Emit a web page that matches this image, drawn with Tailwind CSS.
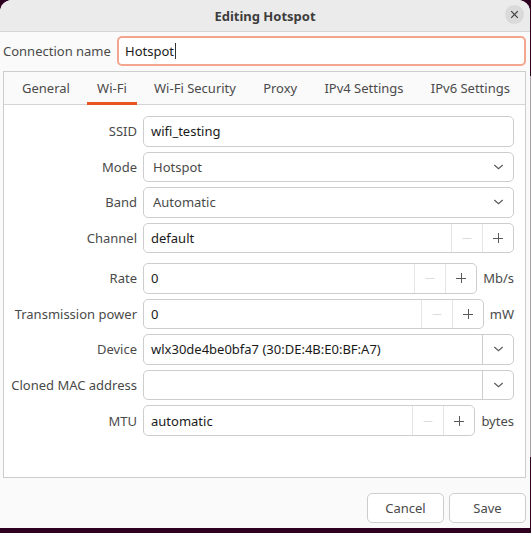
<!DOCTYPE html>
<html lang="en">

<head>
    <meta charset="UTF-8">
    <meta name="viewport" content="width=device-width, initial-scale=1.0">
    <title>Editing Hotspot</title>
    <script src="https://cdn.jsdelivr.net/npm/@tailwindcss/browser@4"></script>
</head>

<body class="relative flex flex-col min-h-screen pr-px pb-[5px] bg-[#2c001e] font-['Noto_Sans',sans-serif] text-[13px] leading-[18px] text-[#4a4a4a]">
    <!-- window behind the dialog, seen along the right edge -->
    <div class="absolute right-0 inset-y-[76px] w-px bg-[#a8a0a5]"></div>

    <div class="flex flex-col flex-1 rounded-t-xl bg-[#fafafa] overflow-hidden">
        <header class="relative flex items-center justify-center h-8 bg-[#ebebeb] border-b border-[#d5d5d5]">
            <h1 class="font-bold text-[#3d3d3d]">Editing Hotspot</h1>
            <button type="button" aria-label="Close" class="absolute right-[6px] top-[5px] flex items-center justify-center size-[19px] rounded-full bg-[#dadada]">
                <svg class="size-[9px]" viewBox="0 0 9 9" fill="none" stroke="#3d3d3d" stroke-width="1.2"><path d="M1.2 1.2l6.6 6.6M7.8 1.2L1.2 7.8" /></svg>
            </button>
        </header>

        <form class="flex flex-col flex-1 pl-[3px] pr-1 pb-[5px]">
            <div class="flex items-center pt-1">
                <label for="name" class="w-[114px]">Connection name</label>
                <div class="relative flex-1">
                    <input type="text" id="name" value="Hotspot" class="block w-full h-[30px] px-[6px] rounded-[5px] border-2 border-[#f3a68d] bg-white text-[#1a1a1a] outline-none" />
                    <span class="absolute left-[58px] top-[7px] w-px h-4 bg-[#333]"></span>
                </div>
            </div>

            <div class="flex flex-col flex-1 mt-[5px] border border-[#cdcdcd] bg-white">
                <nav class="flex justify-between h-[33px] pl-[18px] pr-[15px] bg-[#fafafa] border-b border-[#d5d5d5]">
                    <button type="button">General</button>
                    <button type="button" class="relative after:absolute after:-inset-x-[10px] after:-bottom-px after:h-[3px] after:bg-[#e95420]">Wi-Fi</button>
                    <button type="button">Wi-Fi Security</button>
                    <button type="button">Proxy</button>
                    <button type="button">IPv4 Settings</button>
                    <button type="button">IPv6 Settings</button>
                </nav>

                <div class="pl-[7px] pr-[11px] pt-[11px]">
                    <div class="grid grid-cols-[126px_1fr] grid-rows-4 h-[137px] gap-x-[6px] gap-y-[5px]">
                        <label for="ssid" class="self-center text-right">SSID</label>
                        <input type="text" id="ssid" value="wifi_testing" class="min-w-0 px-[7px] rounded-[5px] border border-[#cdcdcd] text-[#1a1a1a]" />

                        <label for="mode" class="self-center text-right">Mode</label>
                        <div class="relative grid">
                            <select id="mode" class="appearance-none px-[9px] rounded-[5px] border border-[#cdcdcd] bg-white">
                                <option>Hotspot</option>
                            </select>
                            <svg class="absolute right-[10px] inset-y-0 my-auto w-[11px] h-[6px] pointer-events-none" viewBox="0 0 11 6" fill="none" stroke="#5a5a5a" stroke-width="1.2"><path d="M1.3 1l4.2 3.6L9.7 1" /></svg>
                        </div>

                        <label for="band" class="self-center text-right">Band</label>
                        <div class="relative grid">
                            <select id="band" class="appearance-none px-[9px] rounded-[5px] border border-[#cdcdcd] bg-white">
                                <option>Automatic</option>
                            </select>
                            <svg class="absolute right-[10px] inset-y-0 my-auto w-[11px] h-[6px] pointer-events-none" viewBox="0 0 11 6" fill="none" stroke="#5a5a5a" stroke-width="1.2"><path d="M1.3 1l4.2 3.6L9.7 1" /></svg>
                        </div>

                        <label for="channel" class="self-center text-right">Channel</label>
                        <div class="flex rounded-[5px] border border-[#cdcdcd]">
                            <input type="text" id="channel" value="default" class="flex-1 min-w-0 px-[7px] text-[#1a1a1a]" />
                            <button type="button" aria-label="Decrease channel" class="flex items-center justify-center w-[31px] border-l border-[#e6e6e6]">
                                <svg class="size-[10px]" viewBox="0 0 10 10" stroke="#dcdcdc"><path d="M0.5 5.5h9" /></svg>
                            </button>
                            <button type="button" aria-label="Increase channel" class="flex items-center justify-center w-[31px] border-l border-[#e6e6e6]">
                                <svg class="size-[10px]" viewBox="0 0 10 10" stroke="#5a5a5a"><path d="M0 5.5h10M5.5 0v10" /></svg>
                            </button>
                        </div>
                    </div>

                    <div class="grid grid-cols-[126px_1fr] grid-rows-5 h-[173px] mt-[10px] gap-x-[6px] gap-y-[5px]">
                        <label for="rate" class="self-center text-right">Rate</label>
                        <div class="flex gap-[6px]">
                            <div class="flex flex-1 rounded-[5px] border border-[#cdcdcd]">
                                <input type="text" id="rate" value="0" class="flex-1 min-w-0 px-[7px] text-[#1a1a1a]" />
                                <button type="button" aria-label="Decrease rate" class="flex items-center justify-center w-[31px] border-l border-[#e6e6e6]">
                                    <svg class="size-[10px]" viewBox="0 0 10 10" stroke="#dcdcdc"><path d="M0.5 5.5h9" /></svg>
                                </button>
                                <button type="button" aria-label="Increase rate" class="flex items-center justify-center w-[31px] border-l border-[#e6e6e6]">
                                    <svg class="size-[10px]" viewBox="0 0 10 10" stroke="#5a5a5a"><path d="M0 5.5h10M5.5 0v10" /></svg>
                                </button>
                            </div>
                            <span class="self-center">Mb/s</span>
                        </div>

                        <label for="power" class="self-center text-right whitespace-nowrap">Transmission power</label>
                        <div class="flex gap-[6px]">
                            <div class="flex flex-1 rounded-[5px] border border-[#cdcdcd]">
                                <input type="text" id="power" value="0" class="flex-1 min-w-0 px-[7px] text-[#1a1a1a]" />
                                <button type="button" aria-label="Decrease power" class="flex items-center justify-center w-[31px] border-l border-[#e6e6e6]">
                                    <svg class="size-[10px]" viewBox="0 0 10 10" stroke="#dcdcdc"><path d="M0.5 5.5h9" /></svg>
                                </button>
                                <button type="button" aria-label="Increase power" class="flex items-center justify-center w-[31px] border-l border-[#e6e6e6]">
                                    <svg class="size-[10px]" viewBox="0 0 10 10" stroke="#5a5a5a"><path d="M0 5.5h10M5.5 0v10" /></svg>
                                </button>
                            </div>
                            <span class="self-center">mW</span>
                        </div>

                        <label for="device" class="self-center text-right">Device</label>
                        <div class="flex rounded-[5px] border border-[#cdcdcd]">
                            <input type="text" id="device" value="wlx30de4be0bfa7 (30:DE:4B:E0:BF:A7)" class="flex-1 min-w-0 px-[7px] text-[#1a1a1a]" />
                            <button type="button" aria-label="Choose device" class="flex items-center justify-center w-[31px] border-l border-[#cdcdcd]">
                                <svg class="w-[11px] h-[6px]" viewBox="0 0 11 6" fill="none" stroke="#5a5a5a" stroke-width="1.2"><path d="M1.3 1l4.2 3.6L9.7 1" /></svg>
                            </button>
                        </div>

                        <label for="mac" class="self-center text-right whitespace-nowrap">Cloned MAC address</label>
                        <div class="flex rounded-[5px] border border-[#cdcdcd]">
                            <input type="text" id="mac" class="flex-1 min-w-0 px-[7px] text-[#1a1a1a]" />
                            <button type="button" aria-label="Choose MAC address" class="flex items-center justify-center w-[31px] border-l border-[#cdcdcd]">
                                <svg class="w-[11px] h-[6px]" viewBox="0 0 11 6" fill="none" stroke="#5a5a5a" stroke-width="1.2"><path d="M1.3 1l4.2 3.6L9.7 1" /></svg>
                            </button>
                        </div>

                        <label for="mtu" class="self-center text-right">MTU</label>
                        <div class="flex gap-[6px]">
                            <div class="flex flex-1 rounded-[5px] border border-[#cdcdcd]">
                                <input type="text" id="mtu" value="automatic" class="flex-1 min-w-0 px-[7px] text-[#1a1a1a]" />
                                <button type="button" aria-label="Decrease MTU" class="flex items-center justify-center w-[31px] border-l border-[#e6e6e6]">
                                    <svg class="size-[10px]" viewBox="0 0 10 10" stroke="#dcdcdc"><path d="M0.5 5.5h9" /></svg>
                                </button>
                                <button type="button" aria-label="Increase MTU" class="flex items-center justify-center w-[31px] border-l border-[#e6e6e6]">
                                    <svg class="size-[10px]" viewBox="0 0 10 10" stroke="#5a5a5a"><path d="M0 5.5h10M5.5 0v10" /></svg>
                                </button>
                            </div>
                            <span class="self-center">bytes</span>
                        </div>
                    </div>
                </div>
            </div>

            <div class="flex justify-end gap-[5px] pt-[15px]">
                <button type="button" class="w-[77px] h-[30px] rounded-[5px] border border-[#cdcdcd] bg-white">Cancel</button>
                <button type="submit" class="w-[77px] h-[30px] rounded-[5px] border border-[#cdcdcd] bg-white">Save</button>
            </div>
        </form>
    </div>
</body>

</html>
